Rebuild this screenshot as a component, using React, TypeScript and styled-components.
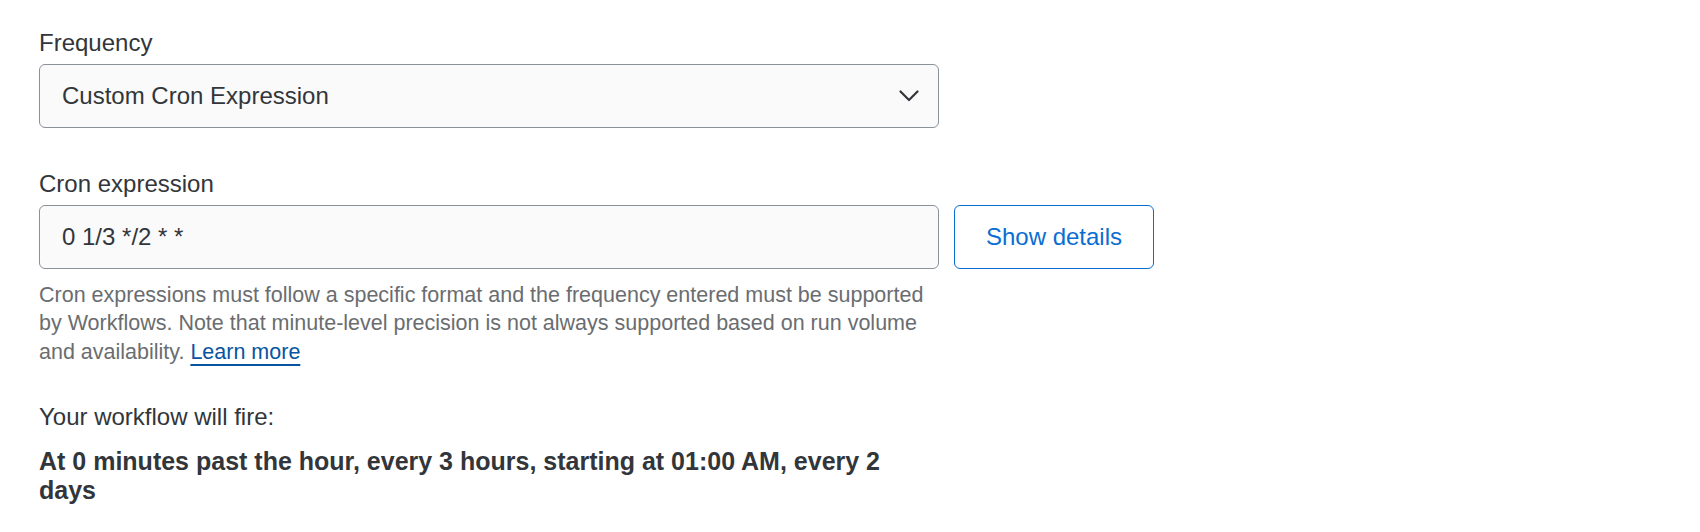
import React from "react";
import styled, { createGlobalStyle } from "styled-components";

const GlobalStyle = createGlobalStyle`
  html, body {
    margin: 0;
    padding: 0;
    background: #ffffff;
  }
  body {
    font-family: "Liberation Sans", Arial, sans-serif;
    color: #32363a;
    -webkit-font-smoothing: antialiased;
  }
`;

const Page = styled.div`
  padding: 29px 39px 0 39px;
  display: flex;
  flex-direction: column;
`;

const Field = styled.div<{ $gapAfter?: number }>`
  display: flex;
  flex-direction: column;
  gap: 6px;
  margin-bottom: ${(p) => p.$gapAfter ?? 0}px;
`;

const Label = styled.label`
  font-size: 24px;
  line-height: 28.8px;
  color: #32363a;
`;

const Row = styled.div`
  display: flex;
  align-items: stretch;
  gap: 15px;
`;

const SelectBox = styled.div`
  box-sizing: border-box;
  width: 900px;
  height: 64px;
  display: flex;
  align-items: center;
  justify-content: space-between;
  padding: 0 19px 0 22px;
  background: #fafafa;
  border: 1px solid #89919a;
  border-radius: 6px;
  font-size: 24px;
  color: #32363a;
`;

const InputBox = styled.div`
  box-sizing: border-box;
  width: 900px;
  height: 64px;
  display: flex;
  align-items: center;
  padding: 0 22px;
  background: #fafafa;
  border: 1px solid #89919a;
  border-radius: 6px;
  font-size: 24px;
  color: #32363a;
`;

const OutlineButton = styled.button`
  box-sizing: border-box;
  width: 200px;
  height: 64px;
  background: #ffffff;
  border: 1px solid #0a6ed1;
  border-radius: 6px;
  color: #0a6ed1;
  font-family: "Liberation Sans", Arial, sans-serif;
  font-size: 24px;
  cursor: pointer;
`;

const HelpText = styled.p`
  margin: 12px 0 0 0;
  width: 896px;
  font-size: 21.5px;
  line-height: 28.8px;
  color: #6a6d70;
`;

const HelpLink = styled.a`
  color: #0854a0;
  text-decoration: underline;
  text-decoration-thickness: 2px;
  text-underline-offset: 5px;
`;

const ResultLabel = styled.div`
  margin-top: 36px;
  font-size: 24px;
  line-height: 28.8px;
  color: #32363a;
`;

const ResultText = styled.div`
  margin-top: 15px;
  width: 870px;
  font-size: 25px;
  line-height: 28.8px;
  font-weight: 700;
  color: #32363a;
`;

const Chevron = () => (
  <svg width="20" height="12" viewBox="0 0 20 12" fill="none">
    <path d="M1.5 1.5 L10 10 L18.5 1.5" stroke="#32363a" strokeWidth="2.2" strokeLinecap="round" strokeLinejoin="round" />
  </svg>
);

export default function App() {
  return (
    <>
      <GlobalStyle />
      <Page>
        <Field $gapAfter={42}>
          <Label>Frequency</Label>
          <SelectBox>
            <span>Custom Cron Expression</span>
            <Chevron />
          </SelectBox>
        </Field>
        <Field>
          <Label>Cron expression</Label>
          <Row>
            <InputBox>0 1/3 */2 * *</InputBox>
            <OutlineButton>Show details</OutlineButton>
          </Row>
        </Field>
        <HelpText>
          Cron expressions must follow a specific format and the frequency entered must be supported by
          Workflows. Note that minute-level precision is not always supported based on run volume and
          availability. <HelpLink href="#">Learn more</HelpLink>
        </HelpText>
        <ResultLabel>Your workflow will fire:</ResultLabel>
        <ResultText>At 0 minutes past the hour, every 3 hours, starting at 01:00 AM, every 2 days</ResultText>
      </Page>
    </>
  );
}
